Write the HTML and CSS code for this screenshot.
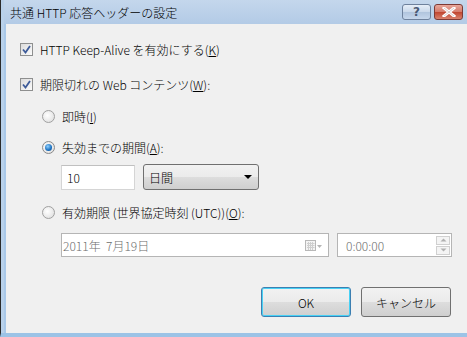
FILE: index.html
```html
<!DOCTYPE html>
<html lang="ja">
<head>
  <meta charset="UTF-8" />
  <title>共通 HTTP 応答ヘッダーの設定</title>
  <link rel="stylesheet" href="styles.css">
</head>
<body>
  <div class="window">
    <div class="titlebar">
      <span class="title">共通 HTTP 応答ヘッダーの設定</span>
      <div class="caption-buttons">
        <span class="cap-btn help">?</span>
        <span class="cap-btn close">
          <svg width="14" height="10" viewBox="0 0 14 10"><path d="M2 1 L12 9 M12 1 L2 9" stroke="#fff" stroke-width="3" stroke-linecap="square"/><path d="M2 1 L12 9 M12 1 L2 9" stroke="#5a2a2a" stroke-width="0.6" fill="none" opacity="0.4"/></svg>
        </span>
      </div>
    </div>

    <div class="content">
      <label class="row check-row first">
        <span class="checkbox"><svg width="9" height="9" viewBox="0 0 9 9"><path d="M1 4.5 L3.5 7.5 L8 1" stroke="#3d5b99" stroke-width="1.8" fill="none"/></svg></span>
        <span>HTTP Keep-Alive を有効にする(<u>K</u>)</span>
      </label>

      <label class="row check-row second">
        <span class="checkbox"><svg width="9" height="9" viewBox="0 0 9 9"><path d="M1 4.5 L3.5 7.5 L8 1" stroke="#3d5b99" stroke-width="1.8" fill="none"/></svg></span>
        <span>期限切れの Web コンテンツ(<u>W</u>):</span>
      </label>

      <div class="options">
        <label class="row radio-row r1">
          <span class="radio"></span>
          <span>即時(<u>I</u>)</span>
        </label>

        <label class="row radio-row r2">
          <span class="radio on"><span class="dot"></span></span>
          <span>失効までの期間(<u>A</u>):</span>
        </label>

        <div class="field-row">
          <div class="textbox">10</div>
          <div class="select">
            <span>日間</span>
            <span class="arrow"></span>
          </div>
        </div>

        <label class="row radio-row r3">
          <span class="radio"></span>
          <span>有効期限 (世界協定時刻 (UTC))(<u>O</u>):</span>
        </label>

        <div class="field-row disabled-row">
          <div class="datebox">
            <span>2011年&nbsp;&nbsp;7月19日</span>
            <span class="cal">
              <svg width="18" height="12" viewBox="0 0 18 12">
                <rect x="0.5" y="0.5" width="10" height="10" fill="#f4f4f4" stroke="#b8b8b8"/>
                <path d="M2 3.5 H9.5 M2 5.5 H9.5 M2 7.5 H9.5 M3.5 2 V10 M5.5 2 V10 M7.5 2 V10" stroke="#cfcfcf" stroke-width="1"/>
                <path d="M12 5 L17 5 L14.5 8 Z" fill="#b5b5b5"/>
              </svg>
            </span>
          </div>
          <div class="timebox">
            <span>0:00:00</span>
            <div class="spin">
              <span class="spin-btn"><svg width="7" height="4" viewBox="0 0 7 4"><path d="M0.5 3.5 L3.5 0.5 L6.5 3.5 Z" fill="#b0b0b0"/></svg></span>
              <span class="spin-btn"><svg width="7" height="4" viewBox="0 0 7 4"><path d="M0.5 0.5 L3.5 3.5 L6.5 0.5 Z" fill="#b0b0b0"/></svg></span>
            </div>
          </div>
        </div>
      </div>

      <div class="buttons">
        <button class="btn default">OK</button>
        <button class="btn">キャンセル</button>
      </div>
    </div>
  </div>
</body>
</html>
```

FILE: styles.css
```css
html, body {
  margin: 0;
  padding: 0;
}
body {
  width: 467px;
  height: 337px;
  overflow: hidden;
  background: #f0f0f0;
  font-family: "Noto Sans CJK JP", "Noto Sans", sans-serif;
  font-size: 12px;
  font-weight: 300;
  color: #000;
}
.window {
  width: 467px;
  height: 337px;
  box-sizing: border-box;
  border-left: 1px solid #2b2b2b;
  border-bottom: 4px solid #9cc3e6;
  background: #b9d1ea;
  padding-left: 3px;
  display: flex;
  flex-direction: column;
}
.titlebar {
  height: 24px;
  display: flex;
  align-items: center;
  justify-content: space-between;
  background: linear-gradient(#c4d7ec, #b3cbe6);
  padding-left: 6px;
}
.title {
  font-size: 12px;
  color: #000;
  padding-top: 1px;
}
.caption-buttons {
  display: flex;
  gap: 3px;
  align-self: flex-start;
  margin-top: 4px;
  margin-right: 4px;
}
.cap-btn {
  height: 16px;
  border-radius: 3px;
  display: flex;
  align-items: center;
  justify-content: center;
  box-sizing: border-box;
}
.help {
  width: 29px;
  border: 1px solid #6e819c;
  background: linear-gradient(#e6eef8 0%, #c9d8ea 50%, #b0c4dd 51%, #c6d7ec 100%);
  color: #4a5a74;
  font-family: "DejaVu Sans", sans-serif;
  font-weight: bold;
  font-size: 12px;
}
.close {
  width: 29px;
  border: 1px solid #7d3a35;
  background: linear-gradient(#e8a89c 0%, #d47a6a 50%, #c0452f 51%, #d9826e 100%);
}
.content {
  flex: 1;
  background: #f0f0f0;
  border-left: 2px solid #a9c8e8;
  padding-left: 14px;
  position: relative;
}
.row {
  display: flex;
  align-items: center;
  gap: 7px;
  height: 16px;
}
.check-row.first {
  margin-top: 17px;
}
.check-row.second {
  margin-top: 19px;
}
.checkbox {
  width: 13px;
  height: 13px;
  box-sizing: border-box;
  border: 1px solid #8e8f8f;
  background: linear-gradient(135deg, #dcdcdc, #fbfbfb);
  display: flex;
  align-items: center;
  justify-content: center;
}
.options {
  padding-left: 22px;
}
.radio {
  width: 13px;
  height: 13px;
  box-sizing: border-box;
  border-radius: 50%;
  border: 1px solid #a0a0a0;
  background: radial-gradient(circle at 40% 40%, #ffffff, #dadada);
  display: flex;
  align-items: center;
  justify-content: center;
}
.radio.on {
  border-color: #8a8a8a;
}
.dot {
  width: 7px;
  height: 7px;
  border-radius: 50%;
  background: radial-gradient(circle at 40% 35%, #8fd1ff, #1a6fbf 60%, #0d4a8a);
}
.radio-row.r1 {
  margin-top: 16px;
}
.radio-row.r2 {
  margin-top: 15px;
}
.radio-row.r3 {
  margin-top: 14px;
}
.field-row {
  display: flex;
  gap: 8px;
  padding-left: 19px;
  margin-top: 10px;
}
.textbox {
  width: 74px;
  height: 25px;
  box-sizing: border-box;
  border: 1px solid #d5d5d5;
  border-top-color: #c0c0c0;
  background: #fff;
  padding-left: 5px;
  line-height: 23px;
}
.select {
  width: 116px;
  height: 26px;
  box-sizing: border-box;
  border: 1px solid #707070;
  border-radius: 3px;
  background: linear-gradient(#f2f2f2 0%, #ebebeb 50%, #dddddd 51%, #cfcfcf 100%);
  display: flex;
  align-items: center;
  justify-content: space-between;
  padding: 0 6px 0 5px;
  margin-top: -1px;
}
.arrow {
  width: 0;
  height: 0;
  border-left: 4px solid transparent;
  border-right: 4px solid transparent;
  border-top: 4px solid #000;
}
.disabled-row {
  margin-top: 13px;
  gap: 8px;
}
.datebox {
  width: 268px;
  height: 24px;
  box-sizing: border-box;
  border: 1px solid #b5b5b5;
  background: #fff;
  color: #6d6d6d;
  display: flex;
  align-items: center;
  justify-content: space-between;
  padding: 0 5px 0 1px;
}
.cal {
  display: flex;
  align-items: center;
  margin-top: 2px;
}
.timebox {
  width: 115px;
  height: 24px;
  box-sizing: border-box;
  border: 1px solid #b5b5b5;
  background: #fff;
  color: #6d6d6d;
  display: flex;
  align-items: center;
  justify-content: space-between;
  padding: 0 1px 0 8px;
}
.spin {
  display: flex;
  flex-direction: column;
  gap: 1px;
}
.spin-btn {
  width: 14px;
  height: 9px;
  box-sizing: border-box;
  border: 1px solid #d0d0d0;
  background: #f4f4f4;
  display: flex;
  align-items: center;
  justify-content: center;
}
.buttons {
  position: absolute;
  right: 16px;
  bottom: 16px;
  display: flex;
  gap: 10px;
}
.btn {
  width: 90px;
  height: 30px;
  box-sizing: border-box;
  border: 1px solid #707070;
  border-radius: 3px;
  background: linear-gradient(#f2f2f2 0%, #ebebeb 50%, #dddddd 51%, #cfcfcf 100%);
  font-family: "Noto Sans CJK JP", "Noto Sans", sans-serif;
  font-size: 12px;
  font-weight: 300;
  color: #000;
  padding: 0;
}
.btn.default {
  border-color: #3c7fb1;
  box-shadow: inset 0 0 0 1px #48d1f5;
}
```
